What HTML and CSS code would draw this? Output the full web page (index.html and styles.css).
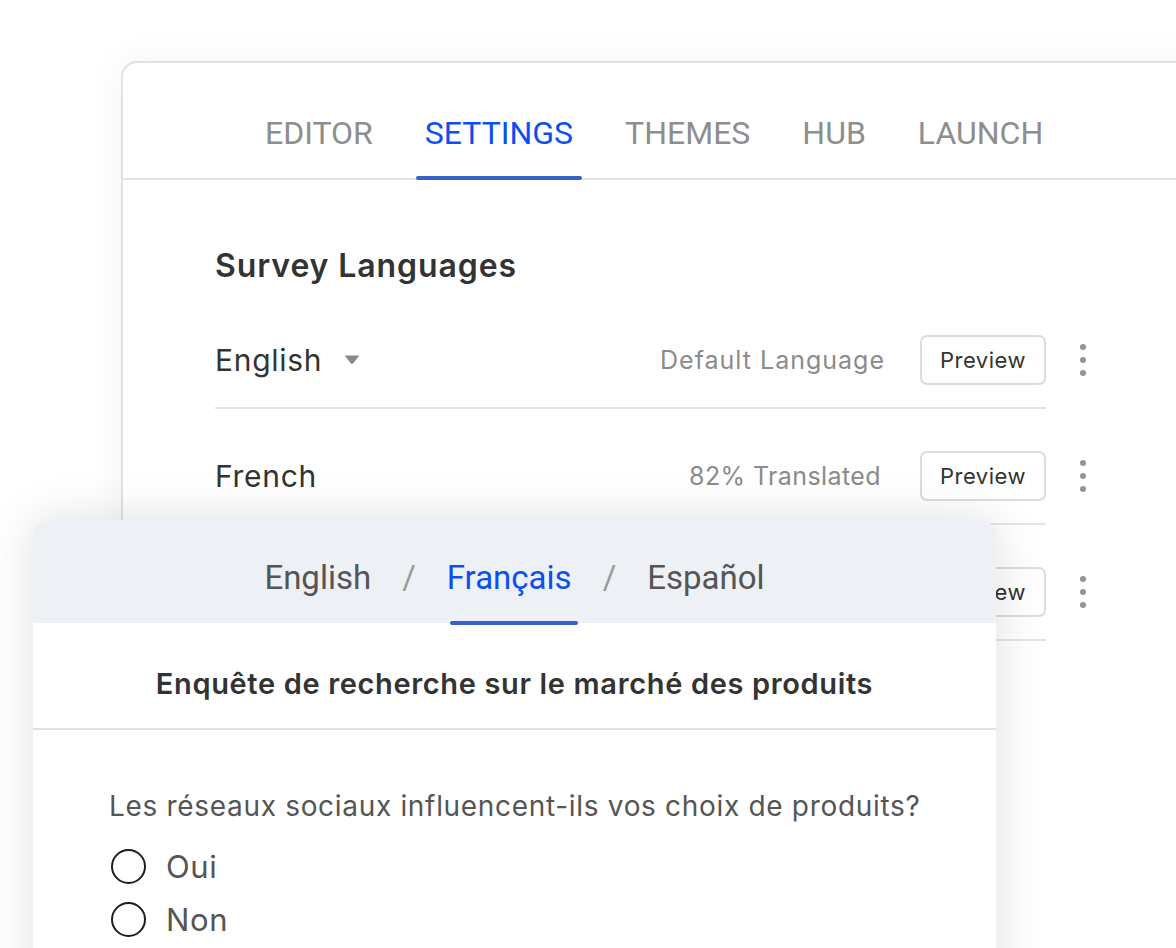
FILE: index.html
```html
<!DOCTYPE html>
<html lang="fr">
<head>
<meta charset="utf-8">
<title>Survey Languages</title>
<link rel="stylesheet" href="styles.css">
</head>
<body>
<div class="stage">
  <div class="back-card">
    <nav class="nav">
      <span class="tab">EDITOR</span>
      <span class="tab active">SETTINGS</span>
      <span class="tab">THEMES</span>
      <span class="tab">HUB</span>
      <span class="tab">LAUNCH</span>
    </nav>
    <div class="content">
      <h2 class="heading">Survey Languages</h2>
      <div class="row">
        <div class="row-main">
          <span class="lang">English</span>
          <svg class="caret" width="16" height="11" viewBox="0 0 16 11"><path d="M2 1.5 H14 Q15.5 1.5 14.6 2.8 L9.2 9.2 Q8 10.5 6.8 9.2 L1.4 2.8 Q0.5 1.5 2 1.5 Z" fill="#8a8a8a"/></svg>
          <span class="status">Default Language</span>
          <span class="btn">Preview</span>
        </div>
        <div class="dots"><i></i><i></i><i></i></div>
      </div>
      <div class="row">
        <div class="row-main">
          <span class="lang">French</span>
          <span class="status status-alt">82% Translated</span>
          <span class="btn">Preview</span>
        </div>
        <div class="dots"><i></i><i></i><i></i></div>
      </div>
      <div class="row">
        <div class="row-main">
          <span class="lang">Spanish</span>
          <span class="status status-alt">60% Translated</span>
          <span class="btn">Preview</span>
        </div>
        <div class="dots"><i></i><i></i><i></i></div>
      </div>
    </div>
  </div>

  <div class="front-card">
    <div class="lang-bar">
      <span class="ltab">English</span>
      <span class="slash">/</span>
      <span class="ltab active">Français</span>
      <span class="slash">/</span>
      <span class="ltab">Español</span>
    </div>
    <div class="survey-title">Enquête de recherche sur le marché des produits</div>
    <div class="question">
      <p class="q-text">Les réseaux sociaux influencent-ils vos choix de produits?</p>
      <div class="option"><span class="radio"></span><span class="opt-label">Oui</span></div>
      <div class="option"><span class="radio"></span><span class="opt-label">Non</span></div>
    </div>
  </div>
</div>
</body>
</html>
```

FILE: styles.css
```css
html, body {
  margin: 0;
  padding: 0;
  background: #ffffff;
}
body {
  width: 1176px;
  height: 948px;
  overflow: hidden;
}
.stage {
  position: relative;
  width: 1176px;
  height: 948px;
  overflow: hidden;
  padding-top: 61px;
  padding-left: 121px;
  box-sizing: border-box;
}
.back-card {
  width: 1120px;
  height: 1000px;
  border: 2px solid #e2e2e2;
  border-radius: 16px;
  background: #fff;
  box-shadow: 0 0 40px rgba(0, 0, 0, 0.05);
  box-sizing: border-box;
}
.nav {
  display: flex;
  align-items: flex-end;
  height: 115px;
  border-bottom: 2px solid #e3e3e3;
  padding-left: 133px;
  gap: 34px;
}
.tab {
  position: relative;
  font-family: Roboto, "Liberation Sans", sans-serif;
  font-size: 32px;
  line-height: 36px;
  color: #8e8e8e;
  padding: 0 9px 27px;
}
.tab.active {
  color: #0b4ff2;
}
.tab.active::after {
  content: "";
  position: absolute;
  left: 0;
  right: 0;
  bottom: -2px;
  height: 4px;
  border-radius: 2px;
  background: #3561c9;
}
.content {
  padding-left: 92px;
  font-family: Inter, "Noto Sans", sans-serif;
}
.heading {
  margin: 0 0 5px;
  padding-top: 64px;
  font-size: 32px;
  line-height: 44px;
  font-weight: 600;
  color: #333;
  letter-spacing: 0.9px;
}
.row {
  display: flex;
  align-items: center;
}
.row-main {
  width: 831px;
  height: 94px;
  display: flex;
  align-items: center;
  border-bottom: 2px solid #e4e4e4;
  padding-top: 20px;
}
.lang {
  font-size: 30px;
  letter-spacing: 0.7px;
  color: #333;
}
.caret {
  margin-left: 22px;
  margin-top: -2px;
}
.status {
  margin-left: auto;
  margin-right: 35px;
  font-size: 25px;
  letter-spacing: 1px;
  color: #8b8b8b;
}
.status-alt {
  margin-right: 39px;
  letter-spacing: 0.4px;
}
.btn {
  width: 126px;
  height: 50px;
  box-sizing: border-box;
  border: 2px solid #dcdcdc;
  border-radius: 7px;
  display: flex;
  align-items: center;
  justify-content: center;
  font-size: 22px;
  letter-spacing: 0.5px;
  color: #333;
}
.dots {
  margin-left: 34px;
  margin-top: 20px;
  margin-bottom: 2px;
  display: flex;
  flex-direction: column;
  gap: 7px;
}
.dots i {
  display: block;
  width: 6px;
  height: 6px;
  border-radius: 50%;
  background: #949494;
}

.front-card {
  position: absolute;
  left: 33px;
  top: 520px;
  width: 963px;
  height: 480px;
  background: #fff;
  border-radius: 16px 16px 0 0;
  box-shadow: 0 0 50px rgba(0, 0, 0, 0.13);
  overflow: hidden;
}
.lang-bar {
  height: 103px;
  background: #edf0f5;
  display: flex;
  justify-content: center;
  align-items: flex-end;
  gap: 31px;
  font-family: Roboto, "Liberation Sans", sans-serif;
  font-size: 33px;
}
.ltab, .slash {
  line-height: 40px;
  padding-bottom: 25px;
}
.ltab {
  position: relative;
  color: #555;
}
.slash {
  color: #9a9a9a;
}
.ltab.active {
  color: #0b4ff2;
}
.ltab.active::after {
  content: "";
  position: absolute;
  left: 3px;
  right: -6px;
  bottom: -2px;
  height: 4px;
  border-radius: 2px;
  background: #3561c9;
}
.survey-title {
  height: 107px;
  border-bottom: 2px solid #e1e1e1;
  display: flex;
  align-items: center;
  justify-content: center;
  font-family: Inter, "Noto Sans", sans-serif;
  font-size: 29px;
  letter-spacing: 0.65px;
  font-weight: 600;
  color: #333;
  box-sizing: border-box;
  padding-top: 15px;
}
.question {
  padding: 56px 0 0 76px;
  font-family: Inter, "Noto Sans", sans-serif;
  color: #555;
}
.q-text {
  margin: 0 0 14px;
  font-size: 28px;
  letter-spacing: 0.68px;
  line-height: 40px;
}
.option {
  display: flex;
  align-items: center;
  gap: 20px;
  height: 53px;
}
.radio {
  width: 35px;
  height: 35px;
  box-sizing: border-box;
  border: 2px solid #1e1e1e;
  border-radius: 50%;
  margin-left: 2px;
}
.opt-label {
  font-size: 31px;
  letter-spacing: 0.6px;
}
```
